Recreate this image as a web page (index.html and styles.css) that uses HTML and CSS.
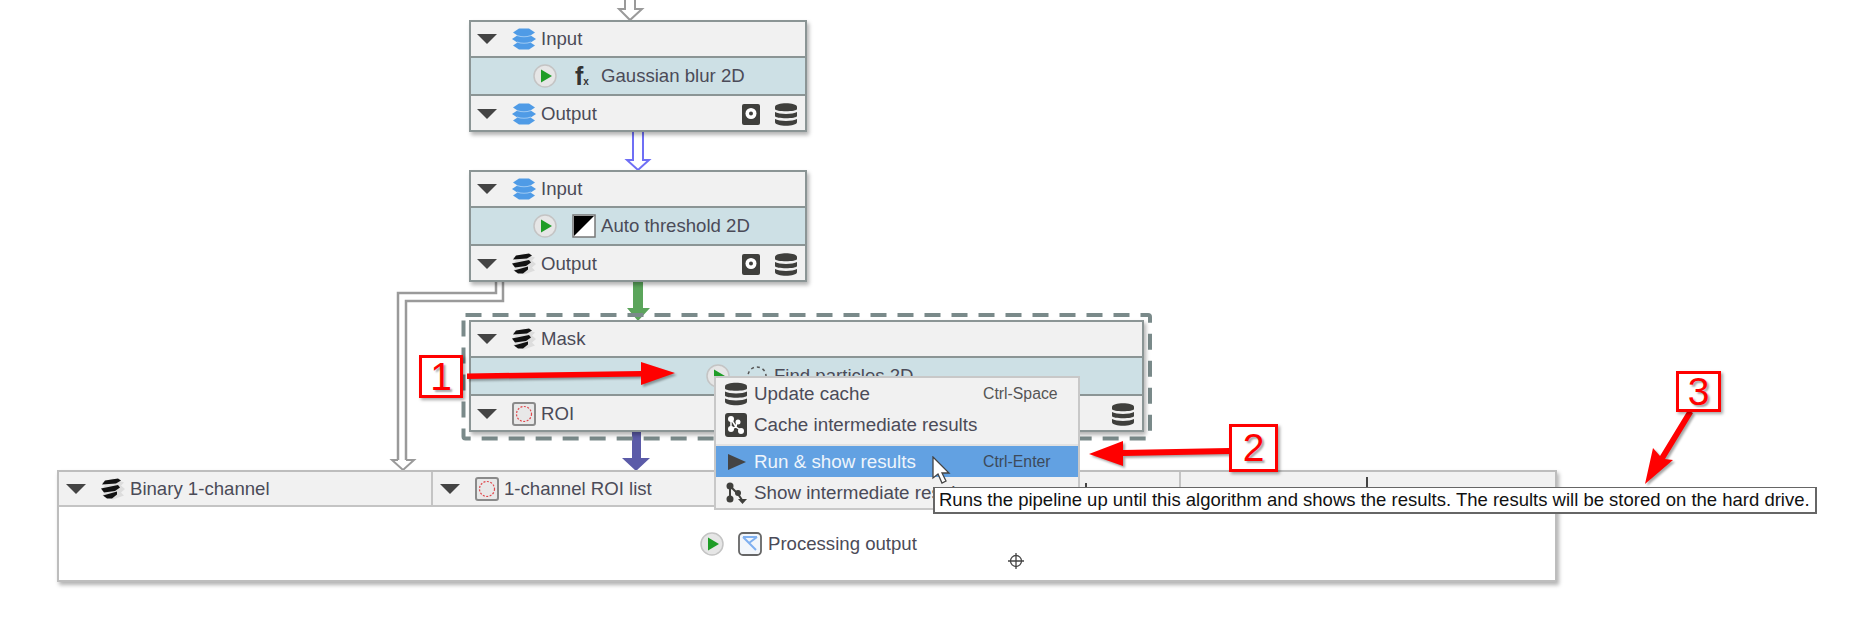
FILE: index.html
```html
<!DOCTYPE html>
<html lang="en">
<head>
  <meta charset="UTF-8" />
  <title>Pipeline editor</title>
  <link rel="stylesheet" href="styles.css">
</head>
<body>
  <svg class="defs" width="0" height="0">
    <defs>
      <symbol id="layers" viewBox="0 0 24 21">
        <path d="M1 4 7 0H17L23 4 17 8H7Z" fill="#4f9be6"/>
        <path d="M0 10.500 6 6.500H18L24 10.500 18 14.500H6Z" fill="#4f9be6"/>
        <path d="M1 17 7 13H17L23 17 17 21H7Z" fill="#4f9be6"/>
        <path d="M5 7Q12 9.500 19 7M5 13.500Q12 16 19 13.500" fill="none" stroke="#9cc8f2" stroke-width="1.200"/>
      </symbol>
      <symbol id="binary" viewBox="0 0 24 21">
        <path d="M12 0 23 4 20 7 24 10.500 20 14 23 17 12 21 1 17 4 14 0 10.500 4 7 1 4Z" fill="#ddd"/>
        <path d="M4 2 17 0 20 2 15 5 1 6ZM0 10 17 6.500 19 9 14 12.500 3 14ZM2 17 16 13 16 16 11 20 6 20Z" fill="#111"/>
      </symbol>
      <symbol id="play" viewBox="0 0 24 24">
        <circle cx="12" cy="12" r="11" fill="#e6e6e6" stroke="#c4c4c4" stroke-width="1.500"/>
        <path d="M8 5.500 19 12 8 18.500Z" fill="#1f9d27"/>
      </symbol>
      <symbol id="threshold" viewBox="0 0 24 24">
        <rect x="1" y="1" width="22" height="22" fill="#fff" stroke="#777" stroke-width="1.500"/>
        <path d="M2 2H22L2 22Z" fill="#000"/>
      </symbol>
      <symbol id="disk" viewBox="0 0 18 21">
        <rect width="18" height="21" rx="2" fill="#3f3f3c"/>
        <circle cx="9" cy="9.500" r="5.500" fill="#fff"/>
        <circle cx="9" cy="9.500" r="2" fill="#3f3f3c"/>
      </symbol>
      <symbol id="db" viewBox="0 0 22 23">
        <path d="M0 4C0 -1 22 -1 22 4V6C22 9 0 9 0 6Z" fill="#3f3f3c"/>
        <path d="M0 9C4 11.500 18 11.500 22 9V13C22 16 0 16 0 13Z" fill="#3f3f3c"/>
        <path d="M0 16C4 18.500 18 18.500 22 16V19C22 24 0 24 0 19Z" fill="#3f3f3c"/>
      </symbol>
      <symbol id="roi" viewBox="0 0 24 24">
        <rect x="1" y="1" width="22" height="22" rx="2" fill="#e8e8e8" stroke="#8a8a8a" stroke-width="2"/>
        <circle cx="12" cy="12" r="7.500" fill="none" stroke="#e0474c" stroke-width="1.200" stroke-dasharray="2 1.500"/>
      </symbol>
      <symbol id="particles" viewBox="0 0 24 24">
        <circle cx="12" cy="12" r="9" fill="none" stroke="#555" stroke-width="1.500" stroke-dasharray="3 3"/>
      </symbol>
      <symbol id="cachesteps" viewBox="0 0 22 24">
        <rect width="22" height="24" rx="3" fill="#3f3f3c"/>
        <path d="M6 6 11 14 17 18M6 6 6 16 11 14 12 8" fill="none" stroke="#fff" stroke-width="1.500"/>
        <circle cx="6" cy="6" r="3" fill="#fff"/>
        <circle cx="6" cy="16" r="3" fill="#fff"/>
        <circle cx="13" cy="9" r="2.500" fill="#fff"/>
        <circle cx="16" cy="18" r="3" fill="#fff"/>
      </symbol>
      <symbol id="steps" viewBox="0 0 22 22">
        <path d="M5 4 5 16M5 4 13 12 17 18" fill="none" stroke="#3f3f3c" stroke-width="2"/>
        <circle cx="5" cy="4" r="3.500" fill="#3f3f3c"/>
        <circle cx="5" cy="17" r="3.500" fill="#3f3f3c"/>
        <circle cx="13" cy="11" r="3" fill="#3f3f3c"/>
        <path d="M13 17H22L17.500 22Z" fill="#3f3f3c"/>
      </symbol>
      <symbol id="pipeline" viewBox="0 0 24 24">
        <rect x="1" y="1" width="22" height="22" rx="4" fill="#f2f6fb" stroke="#666" stroke-width="1.800"/>
        <path d="M5 5 18 18M19 5 11 11M5 5H19" fill="none" stroke="#7fb0f0" stroke-width="2"/>
      </symbol>
    </defs>
  </svg>

  <!-- connections between the nodes -->
  <svg class="canvas-layer" width="1849" height="634">
    <g fill="none" stroke="#9a9a9a" stroke-width="2.500">
      <path d="M625 0V9H619L630 20 642 9H635V0" fill="#fff" stroke-width="2"/>
      <path d="M496 281V293H398V460M503 281V301H406V460"/>
      <path d="M398 460H392L403 470 414 460H406" fill="#fff" stroke-width="2"/>
    </g>
    <path d="M633 131V160H627L638 170 649 160H643V131" fill="#fff" stroke="#6f6ff5" stroke-width="2"/>
    <path d="M633 281H643V308H650L638 321 627 308H633Z" fill="#5ba55b"/>
    <path d="M632 431H641V458H650L636 471 622 458H632Z" fill="#5b5ba8"/>
    <rect class="group-outline" x="463.500" y="315" width="686.500" height="123.500" rx="2"/>
  </svg>

  <section class="node node-blur">
    <div class="row">
      <span class="caret"></span>
      <svg class="icon"><use href="#layers"/></svg>
      <span class="label">Input</span>
    </div>
    <div class="row row-algo">
      <svg class="play"><use href="#play"/></svg>
      <span class="icon fx">f<span class="fx-x">x</span></span>
      <span class="label">Gaussian blur 2D</span>
    </div>
    <div class="row">
      <span class="caret"></span>
      <svg class="icon"><use href="#layers"/></svg>
      <span class="label">Output</span>
      <svg class="disk"><use href="#disk"/></svg>
      <svg class="db"><use href="#db"/></svg>
    </div>
  </section>

  <section class="node node-threshold">
    <div class="row">
      <span class="caret"></span>
      <svg class="icon"><use href="#layers"/></svg>
      <span class="label">Input</span>
    </div>
    <div class="row row-algo">
      <svg class="play"><use href="#play"/></svg>
      <svg class="icon"><use href="#threshold"/></svg>
      <span class="label">Auto threshold 2D</span>
    </div>
    <div class="row">
      <span class="caret"></span>
      <svg class="icon"><use href="#binary"/></svg>
      <span class="label">Output</span>
      <svg class="disk"><use href="#disk"/></svg>
      <svg class="db"><use href="#db"/></svg>
    </div>
  </section>

  <section class="node node-particles">
    <div class="row">
      <span class="caret"></span>
      <svg class="icon"><use href="#binary"/></svg>
      <span class="label">Mask</span>
    </div>
    <div class="row row-algo">
      <svg class="play"><use href="#play"/></svg>
      <svg class="icon"><use href="#particles"/></svg>
      <span class="label">Find particles 2D</span>
    </div>
    <div class="row">
      <span class="caret"></span>
      <svg class="icon"><use href="#roi"/></svg>
      <span class="label">ROI</span>
      <svg class="db"><use href="#db"/></svg>
    </div>
  </section>

  <section class="node node-output">
    <div class="output-head">
      <div class="output-col">
        <span class="caret"></span>
        <svg class="icon"><use href="#binary"/></svg>
        <span class="label">Binary 1-channel</span>
      </div>
      <div class="output-col">
        <span class="caret"></span>
        <svg class="icon"><use href="#roi"/></svg>
        <span class="label">1-channel ROI list</span>
      </div>
      <div class="output-col"></div>
      <div class="output-col"></div>
    </div>
    <div class="output-body">
      <svg class="play"><use href="#play"/></svg>
      <svg class="icon"><use href="#pipeline"/></svg>
      <span class="label">Processing output</span>
    </div>
  </section>

  <span class="tick tick-a"></span>
  <span class="tick tick-b"></span>

  <svg class="crosshair" viewBox="0 0 16 16">
    <circle cx="8" cy="8" r="5.500" fill="none" stroke="#444" stroke-width="1.300"/>
    <path d="M8 0V16M0 8H16" stroke="#444" stroke-width="1.300"/>
  </svg>

  <div class="menu">
    <div class="menu-item">
      <svg class="menu-icon"><use href="#db"/></svg>
      <span class="menu-label">Update cache</span>
      <span class="shortcut">Ctrl-Space</span>
    </div>
    <div class="menu-item">
      <svg class="menu-icon"><use href="#cachesteps"/></svg>
      <span class="menu-label">Cache intermediate results</span>
    </div>
    <div class="menu-sep"></div>
    <div class="menu-item active">
      <span class="menu-play"></span>
      <span class="menu-label">Run &amp; show results</span>
      <span class="shortcut">Ctrl-Enter</span>
    </div>
    <div class="menu-item">
      <svg class="menu-icon"><use href="#steps"/></svg>
      <span class="menu-label">Show intermediate results</span>
    </div>
  </div>

  <div class="tooltip">Runs the pipeline up until this algorithm and shows the results. The results will be stored on the hard drive.</div>

  <svg class="cursor" viewBox="0 0 19 28">
    <path d="M1 1V22L6 18 10 27 14 25 10 17H17Z" fill="#fff" stroke="#444" stroke-width="1.300"/>
  </svg>

  <!-- red annotations -->
  <svg class="canvas-layer" width="1849" height="634">
    <g class="note-shadow" fill="#ff0000">
      <path d="M467 373.500 641 371V362L675 373 641 385V376.500L467 379Z"/>
      <path d="M1229 448 1123 450V441L1089 454 1123 466V456L1229 454Z"/>
      <path d="M1688 410 1660 456 1653 448 1645 484 1673 460 1665 459 1693 413Z"/>
    </g>
  </svg>
  <div class="note note-1">1</div>
  <div class="note note-2">2</div>
  <div class="note note-3">3</div>
</body>
</html>
```

FILE: styles.css
```css
* {
  box-sizing: border-box;
}
body {
  margin: 0;
  width: 1849px;
  height: 634px;
  position: relative;
  overflow: hidden;
  background: #fff;
  font-family: "Liberation Sans", Arial, sans-serif;
  font-size: 18.6px;
  color: #4b4b58;
}
.defs {
  position: absolute;
}
.canvas-layer {
  position: absolute;
  left: 0;
  top: 0;
}
.group-outline {
  fill: none;
  stroke: #7a8a8a;
  stroke-width: 4;
  stroke-dasharray: 16 11;
}

/* nodes */
.node {
  position: absolute;
  background: #f1f1f1;
  border: 2px solid #8b9595;
  box-shadow: 2px 3px 4px rgba(0, 0, 0, 0.3);
}
.node-blur {
  left: 469px;
  top: 20px;
  width: 338px;
  height: 112px;
}
.node-threshold {
  left: 469px;
  top: 170px;
  width: 338px;
  height: 112px;
}
.node-particles {
  left: 469px;
  top: 320px;
  width: 675px;
  height: 112px;
}
.row {
  display: flex;
  align-items: center;
  height: 34px;
  padding-left: 6px;
  padding-right: 8px;
}
.row-algo {
  height: 40px;
  background: #cde0e5;
  border-top: 2px solid #8b9595;
  border-bottom: 2px solid #8b9595;
  padding-left: 62px;
  padding-right: 0;
}
.node-particles .row-algo {
  padding-left: 235px;
}
.row-algo + .row {
  padding-top: 2px;
}
.caret {
  width: 0;
  height: 0;
  flex: none;
  border-left: 10px solid transparent;
  border-right: 10px solid transparent;
  border-top: 10px solid #444;
  margin-right: 15px;
}
.icon {
  width: 24px;
  height: 24px;
  flex: none;
  margin-right: 5px;
}
.label {
  white-space: nowrap;
}
.play {
  width: 24px;
  height: 24px;
  flex: none;
  margin-right: 15px;
}
.fx {
  display: flex;
  align-items: flex-end;
  padding-left: 3px;
  font-weight: bold;
  font-size: 25px;
  line-height: 24px;
  color: #333;
}
.fx-x {
  font-size: 10px;
  line-height: 12px;
}
.disk {
  width: 18px;
  height: 21px;
  flex: none;
  margin-left: auto;
}
.db {
  width: 22px;
  height: 23px;
  flex: none;
  margin-left: 15px;
}
.node-particles .db {
  margin-left: auto;
}

/* output node */
.node-output {
  left: 57px;
  top: 470px;
  width: 1500px;
  height: 112px;
  background: #fff;
  border-color: #bdbdbd;
}
.output-head {
  display: grid;
  grid-template-columns: repeat(4, 1fr);
  height: 35px;
  background: #f1f1f1;
  border-bottom: 2px solid #c4c4c4;
}
.output-col {
  display: flex;
  align-items: center;
  padding-left: 7px;
  border-right: 2px solid #c4c4c4;
}
.output-col:last-child {
  border-right: none;
}
.output-body {
  display: flex;
  align-items: center;
  height: 73px;
  padding-left: 641px;
}
.output-body .play {
  margin-right: 14px;
}
.output-body .icon {
  margin-right: 6px;
}
.tick {
  position: absolute;
  width: 2px;
  background: #444;
}
.tick-a {
  left: 1085px;
  top: 483px;
  height: 4px;
}
.tick-b {
  left: 1366px;
  top: 477px;
  height: 10px;
}
.crosshair {
  position: absolute;
  left: 1008px;
  top: 553px;
  width: 16px;
  height: 16px;
}

/* context menu */
.menu {
  position: absolute;
  left: 714px;
  top: 376px;
  width: 366px;
  height: 134px;
  background: #f1f1f1;
  border: 2px solid #c8c8c8;
}
.menu-item {
  display: flex;
  align-items: center;
  height: 31px;
}
.menu-icon {
  width: 22px;
  height: 24px;
  flex: none;
  margin-left: 9px;
  margin-right: 7px;
}
.menu-play {
  width: 0;
  height: 0;
  flex: none;
  margin-left: 12px;
  margin-right: 8px;
  border-top: 8px solid transparent;
  border-bottom: 8px solid transparent;
  border-left: 18px solid #444;
}
.menu-label {
  width: 229px;
  flex: none;
  white-space: nowrap;
  font-size: 18.8px;
}
.shortcut {
  font-size: 15.8px;
  color: #555;
}
.menu-sep {
  height: 6px;
  padding-top: 2px;
  border-bottom: 2px solid #e2e2e2;
}
.menu-item.active {
  background: #62a1e2;
  color: #eef5fc;
}
.menu-item.active .shortcut {
  color: #3d4a5a;
}

.tooltip {
  position: absolute;
  left: 933px;
  top: 487px;
  width: 884px;
  height: 27px;
  padding-left: 4px;
  line-height: 24px;
  background: #fff;
  border: 2px solid #666;
  border-top-width: 1px;
  color: #111;
  font-size: 18.5px;
  white-space: nowrap;
}
.cursor {
  position: absolute;
  left: 932px;
  top: 456px;
  width: 19px;
  height: 28px;
}

/* annotations */
.note-shadow {
  filter: drop-shadow(2px 2px 1px rgba(0, 0, 0, 0.35));
}
.note {
  position: absolute;
  display: flex;
  align-items: center;
  justify-content: center;
  background: #fff;
  border: 3px solid #f00;
  box-shadow: 2px 2px 3px rgba(0, 0, 0, 0.35);
  color: #f00;
  font-family: "Liberation Sans", sans-serif;
  font-size: 39px;
  text-shadow: 2px 2px 2px rgba(0, 0, 0, 0.35);
}
.note-1 {
  left: 419px;
  top: 355px;
  width: 44px;
  height: 43px;
}
.note-2 {
  left: 1229px;
  top: 424px;
  width: 49px;
  height: 48px;
}
.note-3 {
  left: 1676px;
  top: 371px;
  width: 45px;
  height: 41px;
}
```
